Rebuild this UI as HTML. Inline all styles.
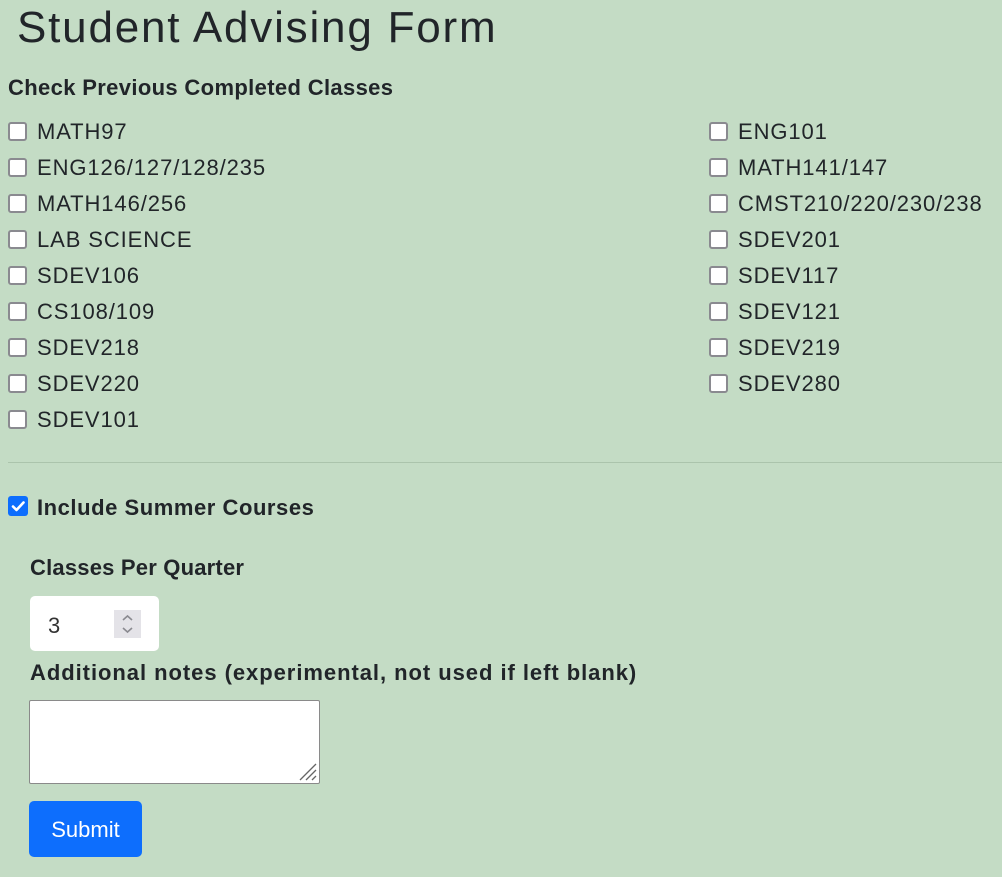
<!DOCTYPE html>
<html><head><style>
body{margin:0;background:#c4dcc5;font-family:"Liberation Sans",sans-serif;color:#212529;width:1002px;height:877px;overflow:hidden;position:relative}
.a{position:absolute;white-space:nowrap}
h1{position:absolute;left:17px;top:3px;margin:0;font-weight:400;font-size:44px;letter-spacing:1.8px}
.cb{position:absolute;width:15px;height:15px;border:2px solid #8a8a90;border-radius:3px;background:#fff}
.lb{position:absolute;font-size:22px;letter-spacing:0.9px}
</style></head><body>
<h1>Student Advising Form</h1>
<div class="a" style="left:8px;top:75px;font-size:22px;font-weight:700;letter-spacing:0.35px">Check Previous Completed Classes</div>
<div id="c"></div>
<script>
var L=["MATH97","ENG126/127/128/235","MATH146/256","LAB SCIENCE","SDEV106","CS108/109","SDEV218","SDEV220","SDEV101"];
var R=["ENG101","MATH141/147","CMST210/220/230/238","SDEV201","SDEV117","SDEV121","SDEV219","SDEV280"];
var h="";
L.forEach(function(t,i){var y=122+i*36;h+='<div class="cb" style="left:8px;top:'+y+'px"></div><div class="lb" style="left:37px;top:'+(y-3)+'px">'+t+'</div>';});
R.forEach(function(t,i){var y=122+i*36;h+='<div class="cb" style="left:709px;top:'+y+'px"></div><div class="lb" style="left:738px;top:'+(y-3)+'px">'+t+'</div>';});
document.getElementById("c").innerHTML=h;
</script>
<div class="a" style="left:8px;top:462px;width:994px;height:1px;background:#abc4ac"></div>
<div class="a" style="left:8px;top:496px;width:20px;height:20px;background:#0d6efd;border-radius:3px">
<svg width="20" height="20" viewBox="0 0 20 20"><path d="M5 10.5l3.5 3.5 7-7.5" stroke="#fff" stroke-width="2.6" fill="none" stroke-linecap="round" stroke-linejoin="round"/></svg></div>
<div class="a" style="left:37px;top:495px;font-size:22px;font-weight:700;letter-spacing:0.55px">Include Summer Courses</div>
<div class="a" style="left:30px;top:555px;font-size:22px;font-weight:700;letter-spacing:0.2px">Classes Per Quarter</div>
<div class="a" style="left:30px;top:596px;width:129px;height:55px;background:#fff;border-radius:5px">
<div class="a" style="left:18px;top:17px;font-size:22px;color:#333">3</div>
<div class="a" style="left:84px;top:14px;width:27px;height:28px;background:#e4e3e8">
<svg width="27" height="28"><path d="M9 10l4.5-4 4.5 4M9 18l4.5 4 4.5-4" stroke="#8a8a90" stroke-width="1.6" fill="none"/></svg></div></div>
<div class="a" style="left:30px;top:660px;font-size:22px;font-weight:700;letter-spacing:0.95px">Additional notes (experimental, not used if left blank)</div>
<div class="a" style="left:29px;top:700px;width:289px;height:82px;background:#fff;border:1px solid #8a8a8a;border-radius:2px">
<svg class="a" style="right:2px;bottom:2px" width="22" height="22"><path d="M21 5L5 21M21 11L11 21M21 17L17 21" stroke="#666" stroke-width="1.3"/></svg></div>
<div class="a" style="left:29px;top:801px;width:113px;height:56px;background:#0d6efd;border-radius:5px;color:#fff;font-size:22px;line-height:58px;text-align:center">Submit</div>
</body></html>
